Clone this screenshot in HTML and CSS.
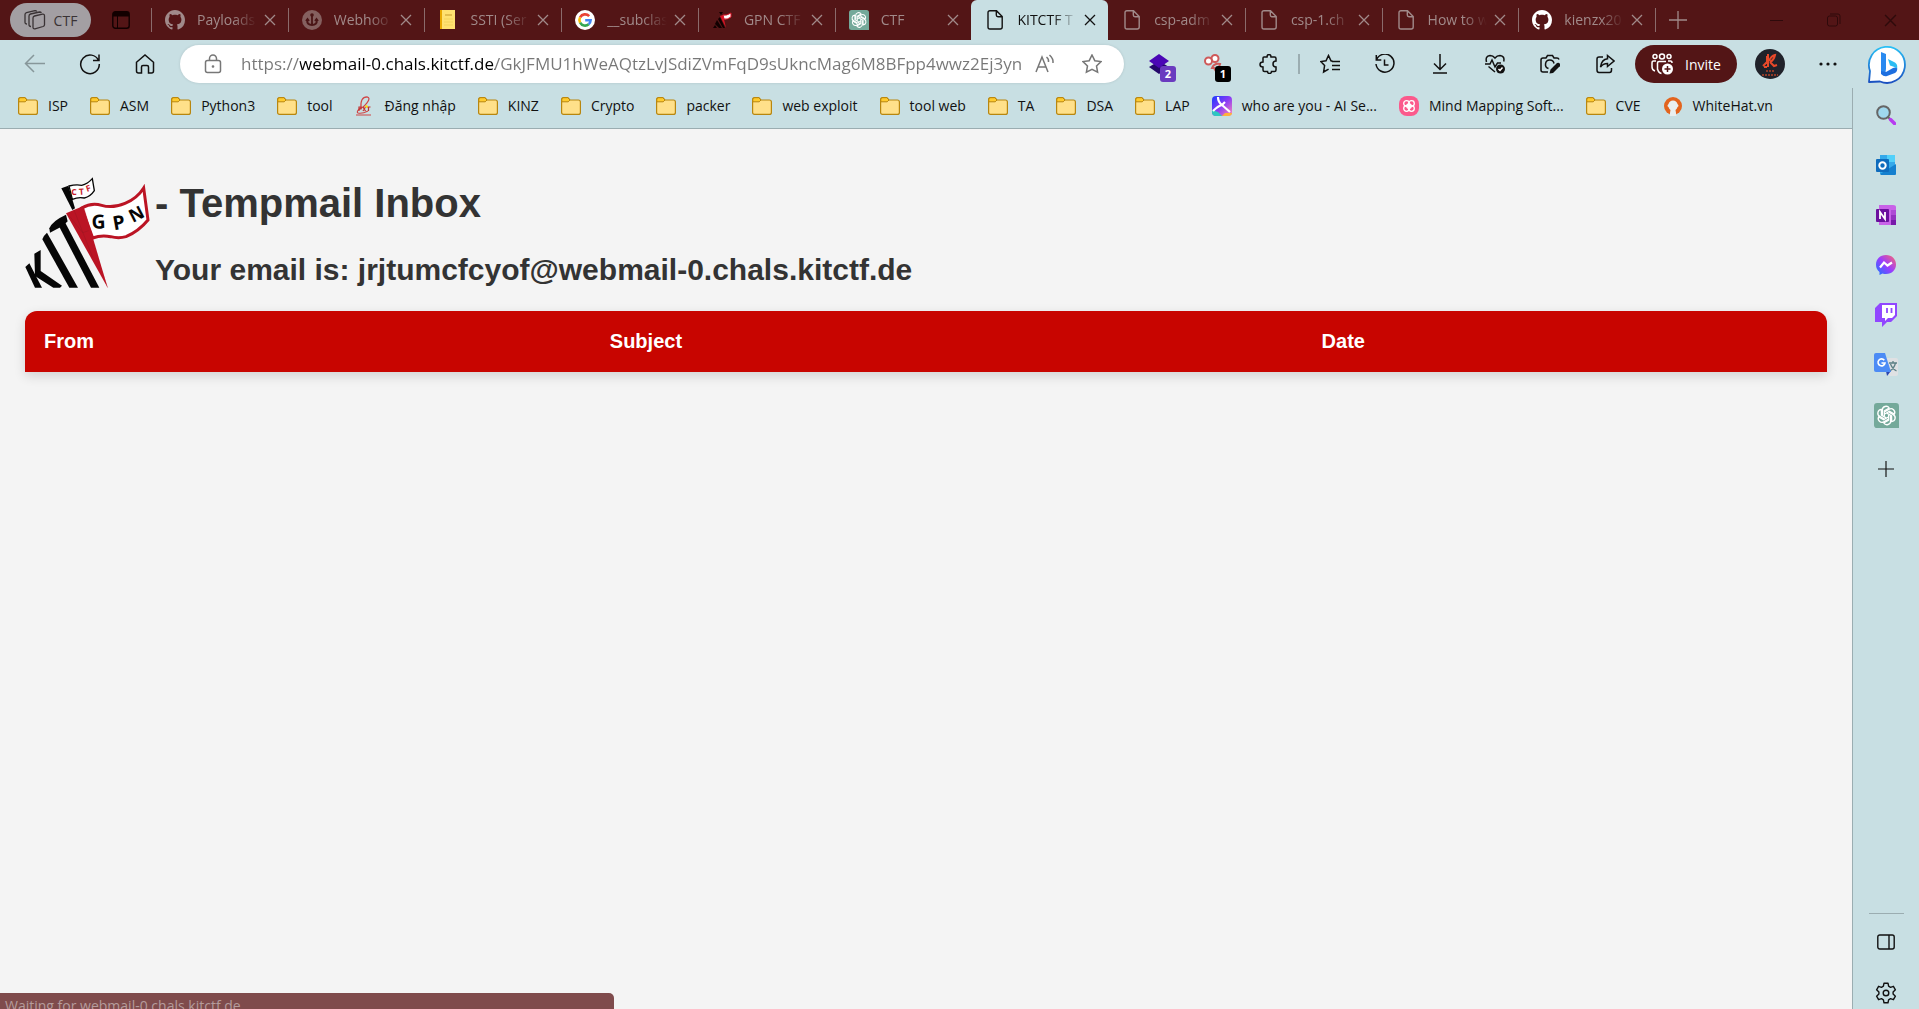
FILE: index.html
```html
<!DOCTYPE html>
<html lang="en">
<head>
<meta charset="utf-8">
<title>KITCTF Tempmail</title>
<link rel="stylesheet" href="styles.css">
</head>
<body>
<svg class="defs" aria-hidden="true">
  <linearGradient id="gBing" x1="0" y1="0" x2="0" y2="1"><stop offset="0" stop-color="#29c0f5"/><stop offset="1" stop-color="#1a4fc0"/></linearGradient>
  <linearGradient id="gMsg" x1="0" y1="1" x2="1" y2="0"><stop offset="0" stop-color="#1477ff"/><stop offset=".5" stop-color="#9b3cff"/><stop offset="1" stop-color="#ff6a6a"/></linearGradient>
  <linearGradient id="gAi" x1="0" y1="0" x2="1" y2="1"><stop offset="0" stop-color="#1b3bff"/><stop offset=".5" stop-color="#8a3cf5"/><stop offset="1" stop-color="#ff8ab8"/></linearGradient>
  <symbol id="close" viewBox="0 0 12 12"><path d="M1 1l10 10M11 1L1 11" fill="none" stroke="currentColor" stroke-width="1.3"/></symbol>
  <symbol id="plus" viewBox="0 0 18 18"><path d="M9 0v18M0 9h18" fill="none" stroke="currentColor" stroke-width="1.3"/></symbol>
  <symbol id="doc" viewBox="0 0 20 20"><path d="M5 .8h6.500L17.200 6.500V17q0 2-2 2H5q-2 0-2-2V2.800q0-2 2-2zM11.300 1v4q0 1.700 1.700 1.700h4" fill="none" stroke="currentColor" stroke-width="1.400"/></symbol>
  <symbol id="github" viewBox="0 0 16 16"><path fill="currentColor" d="M8 0C3.580 0 0 3.580 0 8c0 3.540 2.290 6.530 5.470 7.590.4.070.55-.17.55-.38 0-.19-.01-.82-.01-1.490-2.010.37-2.530-.49-2.690-.94-.09-.23-.48-.94-.82-1.130-.28-.15-.68-.52-.01-.53.63-.01 1.080.58 1.230.82.72 1.210 1.870.87 2.330.66.07-.52.28-.87.51-1.070-1.780-.2-3.640-.89-3.640-3.950 0-.87.31-1.590.82-2.150-.08-.2-.36-1.020.08-2.120 0 0 .67-.21 2.200.82.64-.18 1.320-.27 2-.27s1.360.09 2 .27c1.530-1.040 2.200-.82 2.200-.82.44 1.100.16 1.920.08 2.120.51.56.82 1.270.82 2.150 0 3.070-1.870 3.750-3.650 3.950.29.25.54.73.54 1.480 0 1.070-.01 1.930-.01 2.200 0 .21.15.46.55.38A8.010 8.010 0 0 0 16 8c0-4.420-3.580-8-8-8z"/></symbol>
  <symbol id="gpt" viewBox="0 0 24 24"><path d="M3 0h18q3 0 3 3v21H3q-3 0-3-3V3q0-3 3-3z" fill="#74a99a"/><g fill="none" stroke="#fff" stroke-width="1.300"><path id="petal" d="M8 11.500V6.800a3.600 3.600 0 0 1 6.600-2L9.900 7.600v5.200"/><use href="#petal" transform="rotate(60 12 12)"/><use href="#petal" transform="rotate(120 12 12)"/><use href="#petal" transform="rotate(180 12 12)"/><use href="#petal" transform="rotate(240 12 12)"/><use href="#petal" transform="rotate(300 12 12)"/></g></symbol>
  <symbol id="folder" viewBox="0 0 20 18"><path d="M.6 2.600q0-2 2-2h4.200L9 3h8.400q2 0 2 2v10.400q0 2-2 2H2.600q-2 0-2-2z" fill="#ffe08a" stroke="#b8860f" stroke-width="1.200"/><path d="M.8 2.600q0-1.900 1.900-1.900h4L9 3 7.200 4.800H.8z" fill="#ffcb2e" stroke="#b8860f"/></symbol>
</svg>

<header class="tabstrip">
  <button class="workspace"><svg width="22" height="20" viewBox="0 0 22 20"><g fill="none" stroke="currentColor" stroke-width="1.300"><path d="M9 8q0-1.600 1.500-2l8-1.800q2-.3 2 1.500v9q0 1.300-1.500 1.800l-8 2.300q-2 .3-2-1.500z"/><path d="M7 16.500q-2 0-2-1.800V6q0-1.600 1.500-2l9-2q1.500 0 1.800 1"/><path d="M3 14q-2 0-2-1.800V4.500Q1 3 2.500 2.600l8.500-2q1.500 0 1.800 1"/></g></svg>CTF</button>
  <button class="tab-actions" aria-label="Tab actions"><svg width="18" height="18" viewBox="0 0 18 18"><rect x=".8" y=".8" width="16.400" height="16.400" rx="2.500" fill="none" stroke="#120000" stroke-width="1.400"/><path d="M1 1h16v4.500H1z" fill="#120000"/><path d="M5.500 5v12" stroke="#120000"/></svg></button>
  <nav class="tabs">
    <div class="tab"><svg class="fav"><use href="#github"/></svg><a href="#">Payloads</a><button aria-label="Close tab"><svg><use href="#close"/></svg></button></div>
    <div class="tab"><svg class="fav" viewBox="0 0 20 20"><circle cx="10" cy="10" r="10" fill="#85605f"/><path d="M10 5v11M5 10q0 5 5 5t5-5M4 11l1.500-2L7 11M13 11l1.500-2 1.500 2" fill="none" stroke="#4a1516" stroke-width="1.800"/><circle cx="10" cy="5" r="1.800" fill="#4a1516"/></svg><a href="#">Webhoo</a><button aria-label="Close tab"><svg><use href="#close"/></svg></button></div>
    <div class="tab"><svg class="fav" viewBox="0 0 20 20"><path d="M2 0h15v19H2z" fill="#ffe171"/><path d="M2 0h2v19H2z" fill="#e9a800"/><path d="M7 5h7" stroke="#c79a2c"/><path d="M6 9h9M6 12h9M6 15h9" stroke="#f3d35c"/></svg><a href="#">SSTI (Ser</a><button aria-label="Close tab"><svg><use href="#close"/></svg></button></div>
    <div class="tab"><svg class="fav" viewBox="0 0 20 20"><circle cx="10" cy="10" r="10" fill="#fff"/><g fill="none" stroke-width="2.600"><path d="M14.200 6.200A5.600 5.600 0 0 0 5.100 7.300" stroke="#ea4335"/><path d="M5.100 7.300a5.600 5.600 0 0 0 0 5.400" stroke="#fbbc05"/><path d="M5.100 12.700a5.600 5.600 0 0 0 8.600 1.500" stroke="#34a853"/><path d="M13.700 14.200a5.500 5.500 0 0 0 1.900-3.900H10.200" stroke="#4285f4"/></g></svg><a href="#">__subclas</a><button aria-label="Close tab"><svg><use href="#close"/></svg></button></div>
    <div class="tab"><svg class="fav" viewBox="0 0 20 20"><path d="M1 18l2-3 2 3zM3 14l2-4 5 8H7zM6 9l2-2 5 11h-2z" fill="#100"/><path d="M8 6l3-1 3 13z" fill="#d81324"/><path d="M11 5q3 1 8-2v4q-4 3-7 2z" fill="#fff" stroke="#d81324"/><path d="M7 2l4 0-2 3z" fill="#100"/></svg><a href="#">GPN CTF</a><button aria-label="Close tab"><svg><use href="#close"/></svg></button></div>
    <div class="tab"><svg class="fav"><use href="#gpt"/></svg><a href="#">CTF</a><button aria-label="Close tab"><svg><use href="#close"/></svg></button></div>
    <div class="tab active"><svg class="fav"><use href="#doc"/></svg><a href="#">KITCTF T</a><button aria-label="Close tab"><svg><use href="#close"/></svg></button></div>
    <div class="tab"><svg class="fav"><use href="#doc"/></svg><a href="#">csp-adm</a><button aria-label="Close tab"><svg><use href="#close"/></svg></button></div>
    <div class="tab"><svg class="fav"><use href="#doc"/></svg><a href="#">csp-1.ch</a><button aria-label="Close tab"><svg><use href="#close"/></svg></button></div>
    <div class="tab"><svg class="fav"><use href="#doc"/></svg><a href="#">How to w</a><button aria-label="Close tab"><svg><use href="#close"/></svg></button></div>
    <div class="tab"><svg class="fav white"><use href="#github"/></svg><a href="#">kienzx20</a><button aria-label="Close tab"><svg><use href="#close"/></svg></button></div>
  </nav>
  <button class="new-tab" aria-label="New tab"><svg width="18" height="18"><use href="#plus"/></svg></button>
  <div class="window-controls">
    <button aria-label="Minimize"><svg width="14" height="14"><path d="M0 7.500h13" stroke="currentColor"/></svg></button>
    <button aria-label="Restore"><svg width="14" height="14" fill="none" stroke="currentColor"><rect x=".5" y="3" width="10" height="10" rx="2"/><path d="M3 1h8q2 0 2 2v8"/></svg></button>
    <button aria-label="Close window"><svg width="13" height="13"><use href="#close"/></svg></button>
  </div>
</header>

<div class="toolbar">
  <button class="tool dim" aria-label="Back"><svg width="22" height="20" viewBox="0 0 22 20"><path d="M21 9.500H1.500M10 1L1.500 9.500 10 18"/></svg></button>
  <button class="tool" aria-label="Refresh"><svg width="22" height="22" viewBox="0 0 22 22"><path d="M19.500 7.500A9.300 9.300 0 1 0 20.300 11M20 1.500v6h-6"/></svg></button>
  <button class="tool" aria-label="Home"><svg width="20" height="20" viewBox="0 0 20 20"><path d="M1.500 8.300L10 1l8.500 7.300V17q0 2-2 2h-3v-6q0-1.500-1.500-1.500H8q-1.500 0-1.500 1.500v6h-3q-2 0-2-2z"/></svg></button>
  <div class="address">
    <svg width="18" height="20" viewBox="0 0 18 20"><rect x="1.500" y="6.500" width="15" height="12" rx="2"/><path d="M5.500 6.500V4.500a3.500 3.500 0 0 1 7 0v2"/><circle cx="9" cy="12.500" r=".6" fill="currentColor"/></svg>
    <input type="text" aria-label="Address" value="https://webmail-0.chals.kitctf.de/GkJFMU1hWeAQtzLvJSdiZVmFqD9sUkncMag6M8BFpp4wwz2Ej3yn">
    <button aria-label="Read aloud"><svg width="20" height="20" viewBox="0 0 20 20"><path d="M1 18L7 3l6 15M3.200 13h7.600M11.500 3q2.500 2 2 5M14.500 1q4 3.500 3.500 8"/></svg></button>
    <button aria-label="Add to favorites"><svg width="20" height="20" viewBox="0 0 20 20"><path d="M10 1l2.800 5.700 6.200.9-4.500 4.400 1.100 6.200L10 15.300l-5.600 2.900L5.500 12 1 7.600l6.200-.9z"/></svg></button>
  </div>
  <button class="tool" aria-label="Extension, 2"><svg width="20" height="20" viewBox="0 0 20 20"><path d="M0 13l10 7 10-7-5-3H5z" fill="#24076b" stroke="none"/><path d="M10 0l10 7-10 7L0 7z" fill="#4a06b5" stroke="none"/></svg><span class="badge">2</span></button>
  <button class="tool" aria-label="Extension, 1"><svg width="20" height="20" viewBox="0 0 20 20"><g fill="#fff" stroke="#cf5a5a" stroke-width="2"><path d="M8 14q2-5 8-4l-3 9-3-5z" fill="none"/><circle cx="11" cy="4.500" r="3.500"/><circle cx="4.500" cy="7" r="3.500"/></g></svg><span class="badge black">1</span></button>
  <button class="tool" aria-label="Extensions"><svg width="20" height="20" viewBox="0 0 20 20"><path d="M5 3h3q0-2.500 2-2.500T12 3h3.500q1.500 0 1.500 1.500V7q-3 0-3 3t3 3v3q0 1.500-1.500 1.500H12.500q0 2-2 2t-2-2H5.500Q4 17.500 4 16v-3Q1 13 1 10.500T4 8V4q0-1 1-1z"/></svg></button>
  <span class="divider"></span>
  <button class="tool" aria-label="Favorites"><svg width="20" height="20" viewBox="0 0 20 20"><path d="M12.500 7.300L11 6.800 8.500 1.500 6 6.800.8 7.600l3.800 4L3.600 18l5-2.800M12 7.500h8M12 11.500h8M12 15.500h8"/></svg></button>
  <button class="tool" aria-label="History"><svg width="20" height="20" viewBox="0 0 20 20"><path d="M1.300 1v5h5M1.500 6A9 9 0 1 1 1 10M9.500 5.500V11h4"/></svg></button>
  <button class="tool" aria-label="Downloads"><svg width="20" height="20" viewBox="0 0 20 20"><path d="M10 0v15M4 9.500l6 6 6-6M3 19h14"/></svg></button>
  <button class="tool" aria-label="Browser essentials"><svg width="20" height="20" viewBox="0 0 20 20"><path d="M1.500 8Q0 2 5 1.500q3 0 5 2.500 2-2.500 5-2.500 5 .5 3.700 6M0 10h5l2-4 3 7 2.500-4H16M3.500 12.500L10 18"/><circle cx="15.500" cy="15" r="4.500" fill="#111" stroke="none"/><path d="M13.500 15l1.500 1.500 2.500-3" stroke="#fff"/></svg></button>
  <button class="tool" aria-label="Screenshot"><svg width="20" height="20" viewBox="0 0 20 20"><path d="M8 18H3q-2 0-2-2V6q0-2 2-2h3l1.500-2.500h5L14 4h3q1.500 0 2 1.500M8.500 14.500a4.300 4.300 0 1 1 5.500-5"/><path d="M9.500 19.500l1-4L17 9q2-1 3 1t-1 3l-6 6z" fill="#111" stroke="none"/></svg></button>
  <button class="tool" aria-label="Share"><svg width="20" height="20" viewBox="0 0 20 20"><path d="M8 3H4Q2 3 2 5v11q0 2.500 2 2.500h10.500q2 0 2-2.500v-2M12.500 1.500L19 7l-6.500 5.500V9.500Q8 9.500 5.500 13 6.500 5.500 12.500 4.800z"/></svg></button>
  <button class="invite"><svg width="22" height="22" viewBox="0 0 22 22" fill="none" stroke="#fff" stroke-width="1.500"><circle cx="4" cy="3.500" r="2"/><circle cx="11" cy="3.500" r="2.500"/><circle cx="18" cy="3.500" r="2"/><path d="M5 8H2.500Q1 8 1 10v4q0 3 3 4M6.500 17V10q0-1.500 1.500-1.500h7M17 8h2.500Q21 8 21 10M6.500 16q1 4 4 4.500"/><circle cx="16.500" cy="16" r="5.500" fill="#fff" stroke="none"/><path d="M16.500 13v6M13.500 16h6" stroke="#531516"/></svg>Invite</button>
  <button class="tool profile" aria-label="Profile"><svg width="30" height="30" viewBox="0 0 30 30"><circle cx="15" cy="15" r="15" fill="#20222a" stroke="none"/><path d="M8 17l4-4V7M13 5v13M14 12q2-5 6-6-1 5-5 7M15 13l4 4 3-1M9 18h3" stroke="#e8492a" stroke-width="2"/><path d="M11 22h8M7 26h16" stroke="#8e3a28" stroke-width="2" stroke-dasharray="2 1"/></svg></button>
  <button class="tool" aria-label="Settings and more"><svg width="18" height="4" viewBox="0 0 18 4"><g fill="#111" stroke="none"><circle cx="2" cy="2" r="1.600"/><circle cx="9" cy="2" r="1.600"/><circle cx="16" cy="2" r="1.600"/></g></svg></button>
  <button class="bing" aria-label="Bing Chat"><svg width="40" height="40" viewBox="0 0 40 40"><path d="M2 38l1-11A18 18 0 1 1 13 37.500z" fill="#fff" stroke="url(#gBing)" stroke-width="1.800" stroke-linejoin="round"/><path d="M14 8l5 2v15l-1 6-4-3z" fill="#2a8af0"/><path d="M14 27l5 1 7-4 4-1q1 4-2 6l-8 3q-3 1-6-2z" fill="#1d6fe0"/><path d="M21 15l7 3.500q3 2 2 6-1-1-4-2l-3-1z" fill="#2cbcf3"/></svg></button>
</div>

<div class="frame">
  <div class="column">
    <nav class="bookmarks">
      <a href="#"><svg><use href="#folder"/></svg>ISP</a>
      <a href="#"><svg><use href="#folder"/></svg>ASM</a>
      <a href="#"><svg><use href="#folder"/></svg>Python3</a>
      <a href="#"><svg><use href="#folder"/></svg>tool</a>
      <a href="#"><svg viewBox="0 0 20 20"><path d="M1 19h15M6 12Q5 1 12 .8q4 1 0 6T5 12.500q-4 3-2 4.500 4 1 10-2" fill="none" stroke="#d04545" stroke-width="1.200"/><path d="M4 15v-4h2v2H4M8 11l2.500 4M10.500 11L8 15M13.500 15v-4M12 11h3.500" stroke="#c03030" stroke-width="1.200" fill="none"/><circle cx="11.500" cy="10.500" r="1.300" fill="#fd0"/></svg>Đăng nhập</a>
      <a href="#"><svg><use href="#folder"/></svg>KINZ</a>
      <a href="#"><svg><use href="#folder"/></svg>Crypto</a>
      <a href="#"><svg><use href="#folder"/></svg>packer</a>
      <a href="#"><svg><use href="#folder"/></svg>web exploit</a>
      <a href="#"><svg><use href="#folder"/></svg>tool web</a>
      <a href="#"><svg><use href="#folder"/></svg>TA</a>
      <a href="#"><svg><use href="#folder"/></svg>DSA</a>
      <a href="#"><svg><use href="#folder"/></svg>LAP</a>
      <a href="#"><svg viewBox="0 0 20 20"><rect width="20" height="20" rx="4" fill="url(#gAi)"/><path d="M0 14l6 2 4 4H4q-4 0-4-4z" fill="#2fc7c0"/><path d="M10 20l3-3 7 0q0 3-4 3z" fill="#ffb13c"/><path d="M6 1q0 5 4 8l8 7M10 9q-4 1-9 6M10 9l3-3" fill="none" stroke="#fff" stroke-width="2.200"/></svg>who are you - AI Se...</a>
      <a href="#"><svg viewBox="0 0 20 20"><rect width="20" height="20" rx="8" fill="#fb5a8c"/><g fill="none" stroke="#fff" stroke-width="1.300"><circle cx="10" cy="10" r="2.200"/><circle cx="7.500" cy="7.500" r="2.800"/><circle cx="12.500" cy="7.500" r="2.800"/><circle cx="7.500" cy="12.500" r="2.800"/><circle cx="12.500" cy="12.500" r="2.800"/></g></svg>Mind Mapping Soft...</a>
      <a href="#"><svg><use href="#folder"/></svg>CVE</a>
      <a href="#"><svg viewBox="0 0 20 20"><circle cx="10" cy="10" r="9" fill="#e3641e"/><path d="M5.500 11q-2-1 0-3 1-3.500 4.500-3.500T14.500 8q2 2 0 3-.5 2-2 3l1 6h-7l1-6q-1.500-1-2-3z" fill="#e9eff0"/></svg>WhiteHat.vn</a>
    </nav>

    <main class="page">
      <header class="inbox-head">
        <svg width="125" height="111" viewBox="75 81 375 333" role="img" aria-label="KIT GPN CTF">
          <g fill="#060606">
            <path d="M184 115l21-8 20 68-8 5z"/>
            <path d="M76 351l12-11 38 73h-21z"/>
            <path d="M103 311l19-11v63l64 44-6 6h-20l-55-35z"/>
            <path d="M127 268q4-12 14-20l93 165h-26z"/>
            <path d="M148 235q8-22 50-41l5 20-15 14-38 20z"/>
            <path d="M175 225l20-8 103 196h-25z"/>
          </g>
          <path d="M207 108q22-6 38-2 18-4 32-20l6 36q-12 18-30 22-18-4-36 4z" fill="#fff" stroke="#060606" stroke-width="4"/>
          <path d="M245 174q30-18 60-8 32 10 70-6 36-14 56-46l13 96q-28 34-66 50-22 6-46 0-28-6-54 4z" fill="#fff" stroke="#bb1424" stroke-width="9"/>
          <path d="M198 190l52-22 29 97 44 148z" fill="#bb1424"/>
          <path d="M250 168l29 97-5 10 49 138" fill="none" stroke="#bb1424"/>
          <path d="M222 180l26 66 30 76M210 200l38 48 18-6" fill="none" stroke="#8d1520"/>
          <g class="flag-text">
            <text transform="translate(275 236) rotate(-2)" font-size="58">G</text>
            <text transform="translate(342 241) rotate(-10)" font-size="58">P</text>
            <text transform="translate(398 219) rotate(-27)" font-size="54">N</text>
            <g fill="#c8202c" font-size="26">
              <text transform="translate(214 135)">C</text>
              <text transform="translate(238 135) rotate(-5)">T</text>
              <text transform="translate(261 126) rotate(-18)">F</text>
            </g>
          </g>
        </svg>
        <div class="headings">
          <h1>- Tempmail Inbox</h1>
          <h2>Your email is: jrjtumcfcyof@webmail-0.chals.kitctf.de</h2>
        </div>
      </header>
      <table class="mails">
        <thead><tr><th class="from">From</th><th class="subject">Subject</th><th>Date</th></tr></thead>
      </table>
    </main>
  </div>

  <aside class="sidebar">
    <button aria-label="Search"><svg width="20" height="20" viewBox="0 0 20 20"><circle cx="7.500" cy="7.500" r="6.300" fill="#9fd8ee" stroke="#666" stroke-width="2"/><path d="M12 12l2 2" stroke="#666" stroke-width="2"/><path d="M14.500 14.500l4 4" stroke="#b63cf0" stroke-width="3.500" stroke-linecap="round"/></svg></button>
    <button aria-label="Outlook"><svg width="20" height="20" viewBox="0 0 20 20"><path d="M4 0h15v19H4z" fill="#35a9ea"/><path d="M11 0h8v7h-8z" fill="#52d0fa"/><path d="M4 19l16-10v10q0 1-1 1H5z" fill="#1580cf"/><rect y="4" width="13" height="13" rx="1" fill="#0f6cbd"/><circle cx="6.500" cy="10.500" r="3.200" fill="none" stroke="#fff" stroke-width="2"/></svg></button>
    <button aria-label="OneNote"><svg width="20" height="20" viewBox="0 0 20 20"><path d="M3 0h14q3 0 3 2v18H3z" fill="#c862e8"/><path d="M15 5h5v5h-5z" fill="#ae4bd5"/><path d="M15 10h5v5h-5z" fill="#9332bf"/><path d="M15 15h5v5h-5z" fill="#7719aa"/><rect y="4" width="13" height="13" rx="1" fill="#6b0f9e"/><path d="M4 14V7l5 7V7" fill="none" stroke="#fff" stroke-width="1.800"/></svg></button>
    <button aria-label="Messenger"><svg width="20" height="20" viewBox="0 0 20 20"><path d="M10 0C4 0 0 4.200 0 9.700q0 4.500 3.500 7.300V20l3-1.600q1.700.6 3.500.6c6 0 10-4.200 10-9.500S16 0 10 0z" fill="url(#gMsg)"/><path d="M4 12.500l4-5 3.500 3L16 7.500" fill="none" stroke="#fff" stroke-width="2.200"/></svg></button>
    <button aria-label="Twitch"><svg width="22" height="24" viewBox="0 0 22 24"><path d="M5 0h17v13l-6 6h-4l-5 5v-5H0V5z" fill="#9147ff"/><path d="M7 2h13v10l-3 3h-4l-3 3v-3H7z" fill="#fff"/><path d="M12 5v5M16.500 5v5" stroke="#9147ff" stroke-width="1.800"/></svg></button>
    <button aria-label="Translate"><svg width="24" height="24" viewBox="0 0 24 24"><path d="M11 5h11q2 0 2 2v14q0 2-2 2h-7z" fill="#dfe1e3"/><path d="M15 10h8M19 8v2M21.500 10q-1.500 6-6 8M16.500 11q2 5 6 7" fill="none" stroke="#5c8085" stroke-width="1.300"/><path d="M12 18h5l-4 5z" fill="#2b47b0"/><path d="M2 0h9l6 19H2q-2 0-2-2V2q0-2 2-2z" fill="#4c8bf5"/><path d="M10.300 7.200A3.500 3.500 0 1 0 11 10H7.500" fill="none" stroke="#fff" stroke-width="1.600"/></svg></button>
    <button aria-label="ChatGPT"><svg width="25" height="25"><use href="#gpt"/></svg></button>
    <button class="add" aria-label="Customize"><svg width="16" height="16"><use href="#plus"/></svg></button>
    <div class="sidebar-foot">
      <button aria-label="Hide sidebar"><svg width="18" height="16" viewBox="0 0 18 16" fill="none" stroke="#111" stroke-width="1.400"><rect x=".8" y="1" width="16.400" height="14" rx="2"/><path d="M12 1v14"/></svg></button>
      <button aria-label="Sidebar settings"><svg width="22" height="22" viewBox="0 0 22 22" fill="none" stroke="#111" stroke-width="1.400" stroke-linejoin="round"><path d="M9 1.200h4l.6 3 1.900 1.100 2.900-1 2 3.500L18.100 10v2l2.300 2.200-2 3.500-2.900-1-1.900 1.100-.6 3H9l-.6-3-1.900-1.100-2.900 1-2-3.500L3.900 12v-2L1.600 7.800l2-3.500 2.900 1 1.900-1.100z"/><circle cx="11" cy="11" r="2.800"/></svg></button>
    </div>
  </aside>
</div>
<div class="status">Waiting for webmail-0.chals.kitctf.de</div>
</body>
</html>
```
FILE: styles.css
```css
* { box-sizing: border-box; }

:root {
  --maroon: #531516;
  --frost: #c8dfe3;
  --line: #9badb1;
}

body {
  margin: 0;
  height: 100vh;
  display: flex;
  flex-direction: column;
  overflow: hidden;
  background: #f4f4f4;
  font-family: "Open Sans", "Noto Sans", sans-serif;
  font-size: 14px;
  color: #111;
}

button {
  margin: 0;
  padding: 0;
  border: 0;
  background: none;
  font: inherit;
  color: inherit;
  display: flex;
  align-items: center;
  justify-content: center;
}

a { color: inherit; text-decoration: none; }
svg { display: block; flex: none; }
.defs { position: absolute; width: 0; height: 0; }

/* Tab strip */
.tabstrip {
  flex: none;
  display: flex;
  align-items: center;
  height: 40px;
  padding-left: 10px;
  background: var(--maroon);
  color: #a18a8a;
}
.workspace {
  width: 81px;
  height: 34px;
  gap: 8px;
  border-radius: 17px;
  background: #a39fa3;
  color: #3a3335;
}
.tab-actions { width: 60px; height: 40px; }
.tabs { flex: 1; display: flex; height: 40px; min-width: 0; }
.tab {
  flex: 1;
  min-width: 0;
  display: flex;
  align-items: center;
  padding-right: 5px;
}
.tab::before {
  content: "";
  width: 1px;
  height: 24px;
  margin-right: 13px;
  background: #8b6b6b;
}
.tab.active::before, .tab.active + .tab::before { background: none; }
.tab .fav { width: 20px; height: 20px; margin-right: 12px; }
.tab .fav.white { color: #fff; }
.tab a {
  flex: 1;
  min-width: 0;
  padding-bottom: 2px;
  overflow: hidden;
  white-space: nowrap;
  -webkit-mask-image: linear-gradient(to right, #000 60%, transparent);
  mask-image: linear-gradient(to right, #000 60%, transparent);
}
.tab button { width: 26px; height: 26px; }
.tab button svg { width: 12px; height: 12px; }
.tab.active {
  background: var(--frost);
  color: #111;
  border-radius: 6px 6px 0 0;
}
.new-tab {
  width: 44px;
  height: 24px;
  border-left: 1px solid #8b6b6b;
}
.window-controls { display: flex; margin-left: 49px; color: #2e0a0b; }
.window-controls button { width: 57px; height: 40px; }

/* Toolbar */
.toolbar {
  flex: none;
  display: flex;
  align-items: center;
  height: 48px;
  padding-left: 7px;
  background: var(--frost);
}
.tool { position: relative; flex: none; width: 55px; height: 40px; }
.tool svg, .address svg {
  fill: none;
  stroke: currentColor;
  stroke-width: 1.5;
}
.dim { color: #87979a; }
.address {
  flex: 1;
  min-width: 0;
  display: flex;
  align-items: center;
  height: 38px;
  margin: 0 7px 0 8px;
  padding: 0 8px 0 24px;
  border-radius: 19px;
  background: #fff;
  color: #777;
  box-shadow: 0 0 3px rgba(0, 0, 0, .12);
}
.address input {
  flex: 1;
  min-width: 0;
  margin-left: 19px;
  padding: 0;
  border: 0;
  outline: 0;
  font: inherit;
  font-size: 17px;
  line-height: 24px;
  background: linear-gradient(to right, #777 59px, #000 59px, #000 254px, #777 254px);
  -webkit-background-clip: text;
  background-clip: text;
  -webkit-text-fill-color: transparent;
}
.address button { width: 49px; height: 38px; }
.address button:nth-of-type(1) { width: 44px; }
.badge {
  position: absolute;
  left: 29px;
  top: 22px;
  width: 16px;
  height: 16px;
  border-radius: 3px;
  background: #6a3bbf;
  color: #fff;
  font-size: 11px;
  font-weight: 700;
  line-height: 16px;
}
.badge.black { background: #000; }
.divider { width: 2px; height: 20px; margin: 0 2px; background: var(--line); }
.invite {
  flex: none;
  width: 102px;
  height: 38px;
  margin: 0 5px 0 3px;
  gap: 12px;
  border-radius: 19px;
  background: var(--maroon);
  color: #fff;
}
.profile { margin-right: 3px; }
.bing { flex: none; width: 64px; height: 48px; }

/* Bookmarks and page column */
.frame { flex: 1; display: flex; min-height: 0; background: var(--frost); }
.column { flex: 1; min-width: 0; display: flex; flex-direction: column; }
.bookmarks {
  display: flex;
  align-items: center;
  gap: 22px;
  height: 41px;
  padding: 0 18px 5px;
  border-bottom: 1px solid var(--line);
  white-space: nowrap;
}
.bookmarks a { display: flex; align-items: center; gap: 10px; }
.bookmarks svg { width: 20px; height: 20px; }

.page {
  flex: 1;
  padding: 48px 25px;
  background: #f4f4f4;
  font-family: "Liberation Sans", Arial, sans-serif;
  color: #333;
}
.inbox-head { display: flex; gap: 5px; margin-bottom: 23px; }
.headings { padding-top: 3px; }
h1, h2 { margin: 0; }
h1 { font-size: 40px; line-height: 46px; margin-bottom: 27px; }
h2 { font-size: 30px; line-height: 34px; }
.flag-text { font-family: "Open Sans", sans-serif; font-weight: 700; fill: #060606; }

.mails {
  width: 100%;
  border-spacing: 0;
  border-radius: 12px 12px 0 0;
  overflow: hidden;
  background: #c80500;
  color: #fff;
  font-size: 20px;
  line-height: 23px;
  text-align: left;
  box-shadow: 0 4px 12px rgba(0, 0, 0, .14);
}
.mails th { padding: 19px; }
.from { width: 31.4%; }
.subject { width: 39.5%; }

/* Sidebar */
.sidebar {
  flex: none;
  display: flex;
  flex-direction: column;
  width: 67px;
  padding-top: 2px;
  border-left: 1px solid var(--line);
}
.sidebar button { width: 66px; height: 50px; }
.sidebar .add { margin-top: 4px; }
.sidebar-foot { margin-top: auto; }
.sidebar-foot::before {
  content: "";
  display: block;
  width: 35px;
  height: 1px;
  margin: 0 auto 3px;
  background: var(--line);
}
.sidebar-foot button:last-child { height: 32px; margin-top: 10px; }

/* Link status bubble, partly below the window edge */
.status {
  position: fixed;
  left: 0;
  bottom: -10px;
  width: 32%;
  height: 26px;
  padding-left: 5px;
  line-height: 26px;
  border-radius: 0 5px 0 0;
  background: #7f4b4c;
  color: #b59c9c;
}
```
